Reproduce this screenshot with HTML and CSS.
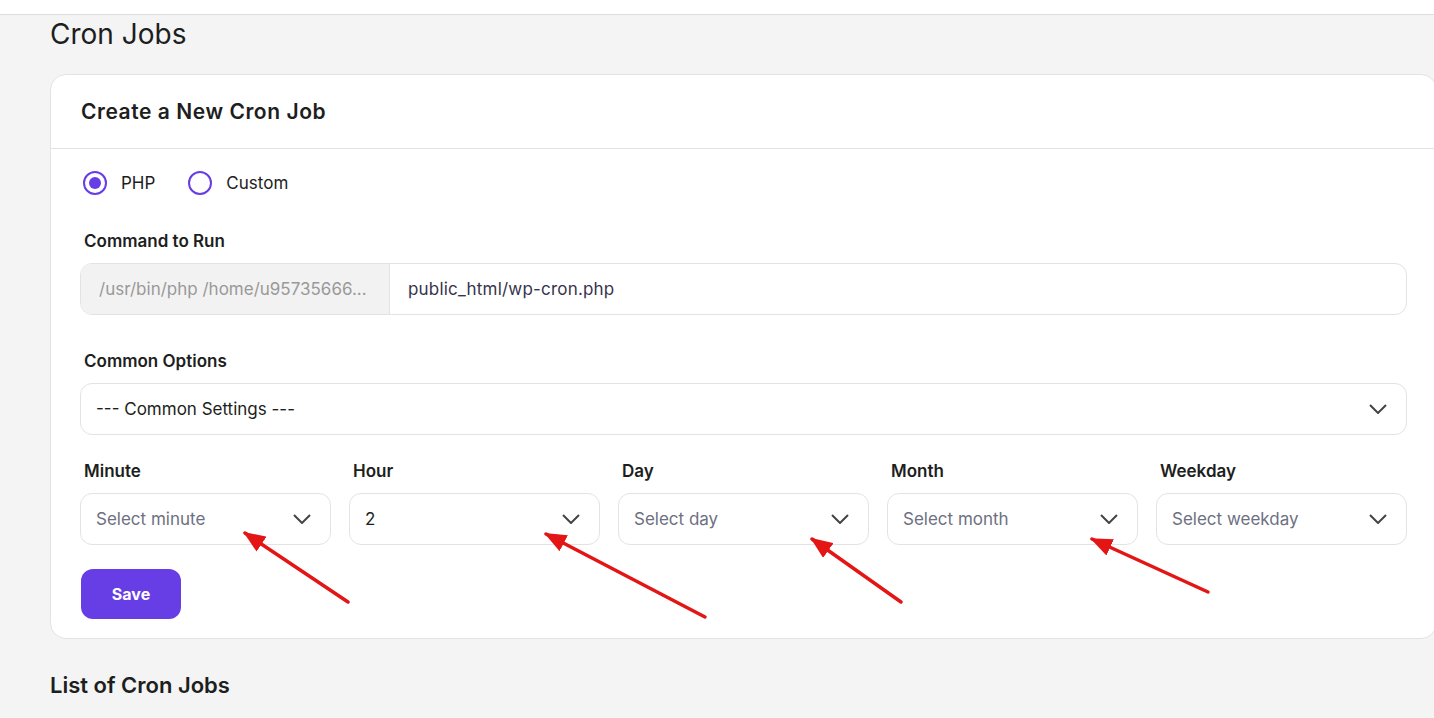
FILE: index.html
```html
<!DOCTYPE html>
<html lang="en">
<head>
    <meta charset="UTF-8">
    <meta name="viewport" content="width=device-width, initial-scale=1.0">
    <title>Cron Jobs</title>
    <link rel="stylesheet" href="styles.css">
</head>
<body>
    <div class="topbar"></div>

    <main class="page">
        <h1 class="page-title">Cron Jobs</h1>

        <section class="card">
            <div class="card-header">
                <h2>Create a New Cron Job</h2>
            </div>

            <div class="card-body">
                <div class="radio-row">
                    <label class="radio">
                        <span class="radio-dot checked"></span>
                        PHP
                    </label>
                    <label class="radio">
                        <span class="radio-dot"></span>
                        Custom
                    </label>
                </div>

                <div class="field">
                    <div class="field-label">Command to Run</div>
                    <div class="input-group">
                        <div class="input-prefix">/usr/bin/php /home/u95735666...</div>
                        <div class="input-value">public_html/wp-cron.php</div>
                    </div>
                </div>

                <div class="field">
                    <div class="field-label">Common Options</div>
                    <div class="select">
                        <span class="select-text value">--- Common Settings ---</span>
                        <svg class="chevron" viewBox="0 0 18 10"><path d="M1 1l8 8 8-8"/></svg>
                    </div>
                </div>

                <div class="schedule">
                    <div class="field">
                        <div class="field-label">Minute</div>
                        <div class="select">
                            <span class="select-text">Select minute</span>
                            <svg class="chevron" viewBox="0 0 18 10"><path d="M1 1l8 8 8-8"/></svg>
                        </div>
                    </div>
                    <div class="field">
                        <div class="field-label">Hour</div>
                        <div class="select">
                            <span class="select-text value">2</span>
                            <svg class="chevron" viewBox="0 0 18 10"><path d="M1 1l8 8 8-8"/></svg>
                        </div>
                    </div>
                    <div class="field">
                        <div class="field-label">Day</div>
                        <div class="select">
                            <span class="select-text">Select day</span>
                            <svg class="chevron" viewBox="0 0 18 10"><path d="M1 1l8 8 8-8"/></svg>
                        </div>
                    </div>
                    <div class="field">
                        <div class="field-label">Month</div>
                        <div class="select">
                            <span class="select-text">Select month</span>
                            <svg class="chevron" viewBox="0 0 18 10"><path d="M1 1l8 8 8-8"/></svg>
                        </div>
                    </div>
                    <div class="field">
                        <div class="field-label">Weekday</div>
                        <div class="select">
                            <span class="select-text">Select weekday</span>
                            <svg class="chevron" viewBox="0 0 18 10"><path d="M1 1l8 8 8-8"/></svg>
                        </div>
                    </div>
                </div>

                <button class="btn-save" type="button">Save</button>
            </div>
        </section>

        <h2 class="list-title">List of Cron Jobs</h2>
    </main>

    <!-- annotation arrows drawn over the screenshot -->
    <svg class="annotations" viewBox="0 0 1434 718">
        <defs>
            <marker id="head" markerUnits="userSpaceOnUse" markerWidth="22" markerHeight="18" refX="20" refY="9" orient="auto">
                <path d="M0 0L22 9L0 18z" fill="#e31515"/>
            </marker>
        </defs>
        <line x1="348" y1="602" x2="245" y2="533" marker-end="url(#head)"/>
        <line x1="705" y1="617" x2="546" y2="534" marker-end="url(#head)"/>
        <line x1="901" y1="602" x2="812" y2="539" marker-end="url(#head)"/>
        <line x1="1208" y1="592" x2="1092" y2="539" marker-end="url(#head)"/>
    </svg>
</body>
</html>
```

FILE: styles.css
```css
:root {
    --purple: #673de6;
    --text: #1d1e20;
    --muted: #6d7081;
    --border: #e3e3e3;
}

* {
    margin: 0;
    padding: 0;
    box-sizing: border-box;
    font-family: 'Inter', 'Noto Sans', sans-serif;
}

body {
    background: #f4f4f4;
    color: var(--text);
    overflow: hidden;
    position: relative;
}

.topbar {
    height: 15px;
    background: white;
    border-bottom: 1px solid #dedede;
}

.page {
    padding-left: 50px;
}

.page-title {
    font-size: 28px;
    font-weight: 400;
    line-height: 36px;
    margin-top: 1px;
    margin-bottom: 22px;
}

.card {
    width: 1387px;
    background: white;
    border: 1px solid var(--border);
    border-radius: 16px;
}

.card-header {
    height: 74px;
    padding: 0 30px;
    display: flex;
    align-items: center;
    border-bottom: 1px solid var(--border);
}

.card-header h2 {
    font-size: 21px;
    font-weight: 600;
    letter-spacing: 0.55px;
}

.card-body {
    padding: 22px 29px 19px;
}

.radio-row {
    display: flex;
    gap: 30px;
    margin-bottom: 36px;
}

.radio {
    display: flex;
    align-items: center;
    gap: 14px;
    font-size: 17px;
    line-height: 24px;
    padding-left: 3px;
}

.radio-dot {
    width: 24px;
    height: 24px;
    border: 2px solid var(--purple);
    border-radius: 50%;
    display: flex;
    align-items: center;
    justify-content: center;
}

.radio-dot.checked::after {
    content: '';
    width: 12px;
    height: 12px;
    border-radius: 50%;
    background: var(--purple);
}

.field {
    margin-bottom: 36px;
}

.field-label {
    font-size: 17px;
    font-weight: 600;
    line-height: 20px;
    margin-bottom: 12px;
    padding-left: 4px;
}

.input-group {
    display: flex;
    height: 52px;
    border: 1px solid var(--border);
    border-radius: 12px;
    overflow: hidden;
    font-size: 17px;
}

.input-prefix {
    width: 309px;
    background: #f2f2f2;
    color: #999;
    border-right: 1px solid var(--border);
    display: flex;
    align-items: center;
    padding-left: 18px;
    white-space: nowrap;
}

.input-value {
    display: flex;
    align-items: center;
    padding-left: 18px;
    color: #36344d;
    letter-spacing: 0.2px;
}

.select {
    height: 52px;
    border: 1px solid var(--border);
    border-radius: 12px;
    display: flex;
    align-items: center;
    justify-content: space-between;
    padding: 0 19px 0 15px;
    font-size: 17px;
}

.select-text {
    color: var(--muted);
}

.select-text.value {
    color: var(--text);
}

.chevron {
    width: 18px;
    height: 10px;
    fill: none;
    stroke: #444;
    stroke-width: 2;
}

.schedule {
    display: grid;
    grid-template-columns: repeat(5, 1fr);
    gap: 18px;
    margin-top: -10px;
}

.schedule .field {
    margin-bottom: 24px;
}

.btn-save {
    width: 100px;
    height: 50px;
    margin-left: 1px;
    background: var(--purple);
    color: white;
    border: none;
    border-radius: 12px;
    font-size: 16px;
    font-weight: 700;
    cursor: pointer;
}

.list-title {
    font-size: 22px;
    font-weight: 600;
    line-height: 28px;
    margin-top: 32px;
}

.annotations {
    position: absolute;
    top: 0;
    left: 0;
    width: 1434px;
    height: 718px;
    pointer-events: none;
}

.annotations line {
    stroke: #e31515;
    stroke-width: 3.5;
    stroke-linecap: round;
}
```
